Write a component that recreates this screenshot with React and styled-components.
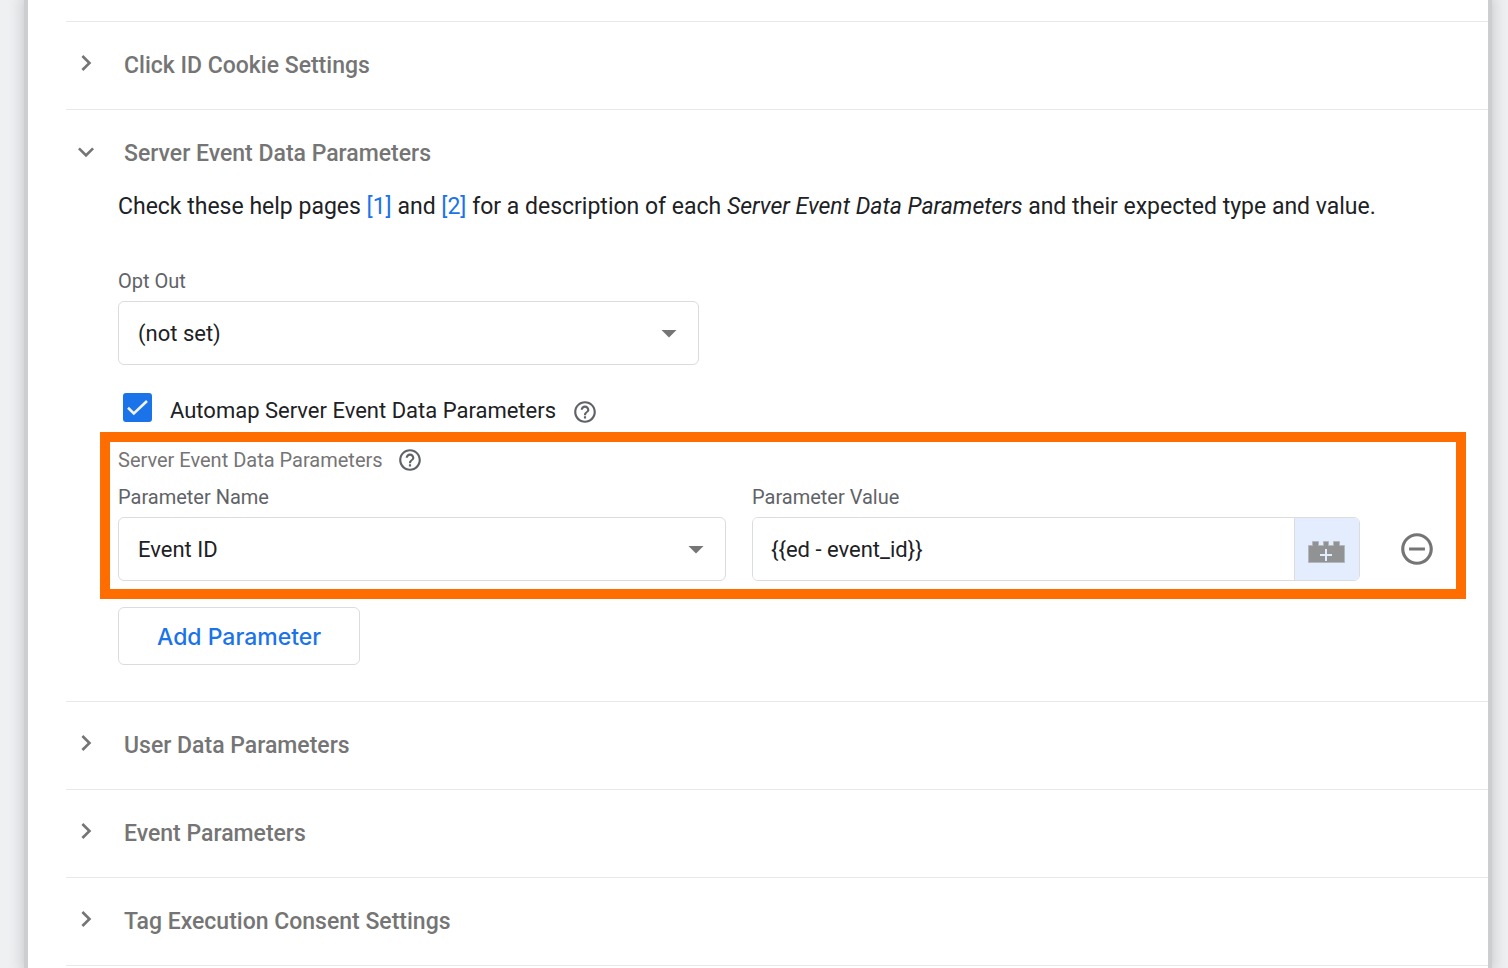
import React, { useState } from 'react';
import styled, { createGlobalStyle } from 'styled-components';
import {
  MdArrowDropDown,
  MdChevronRight,
  MdExpandMore,
  MdHelpOutline,
  MdRemoveCircleOutline,
} from 'react-icons/md';

const colors = {
  page: '#eff0f2',
  text: '#202124',
  title: '#757575',
  label: '#5f6368',
  icon: '#757575',
  line: '#e8e8e8',
  border: '#dadce0',
  blue: '#1a73e8',
  addon: '#e4edfd',
  highlight: '#ff6d00',
};

const GlobalStyle = createGlobalStyle`
  *, *::before, *::after {
    box-sizing: border-box;
  }

  body {
    margin: 0;
    background: ${colors.page};
    color: ${colors.text};
    font-family: Roboto, 'Liberation Sans', sans-serif;
    font-size: 22px;
    line-height: 32px;
  }

  button, input, select {
    font: inherit;
    color: inherit;
  }
`;

const Page = styled.main`
  min-height: 100vh;
  padding: 0 20px 0 28px;
  overflow: hidden;
`;

const Panel = styled.div`
  min-height: 100vh;
  padding: 21px 0 0 38px;
  background: #fff;
  box-shadow: 0 0 0 4px #cdced0, 0 0 14px 5px rgba(60, 64, 67, 0.24);
`;

const SectionBox = styled.section`
  border-top: 1px solid ${colors.line};

  &:last-child {
    border-bottom: 1px solid ${colors.line};
  }
`;

const SectionTitle = styled.h2`
  margin: 0;
  font-size: 23px;
  font-weight: 500;
`;

const SectionToggle = styled.button`
  display: flex;
  align-items: center;
  gap: 18px;
  width: 100%;
  padding: ${props => (props.$open ? '28px 0 21px' : '28px 0 27px')};
  border: 0;
  background: none;
  color: ${colors.title};
  text-align: left;
  cursor: pointer;
`;

const ToggleIcon = styled.span`
  display: flex;
  justify-content: center;
  align-items: center;
  width: 40px;
  height: 32px;
  padding-bottom: ${props => (props.$open ? '4px' : '6px')};
`;

const SectionBody = styled.div`
  padding: 0 22px 36px 52px;
`;

const Description = styled.p`
  margin: 0 0 46px;
  font-size: 23px;
`;

const Link = styled.a`
  color: ${colors.blue};
  text-decoration: none;
`;

const Field = styled.div`
  display: flex;
  flex-direction: column;
  gap: 8px;
  min-width: 0;
  width: ${props => props.$width || 'auto'};
  max-width: 100%;
`;

const Label = styled.label`
  color: ${colors.label};
  font-size: 20px;
  line-height: 24px;
`;

const SelectBox = styled.div`
  display: grid;
  grid-template-columns: 1fr 48px;
  align-items: center;

  svg {
    grid-area: 1 / 2;
    color: ${colors.icon};
    pointer-events: none;
  }
`;

const Select = styled.select`
  grid-area: 1 / 1 / 2 / 3;
  height: 64px;
  padding: 2px 48px 0 19px;
  border: 1px solid ${colors.border};
  border-radius: 6px;
  background: #fff;
  appearance: none;
`;

const CheckRow = styled.div`
  display: flex;
  gap: 16px;
  height: 32px;
  margin: 28px 0 7px;
  padding-left: 5px;
`;

const CheckLabel = styled.label`
  display: flex;
  gap: 18px;
`;

const CheckText = styled.span`
  padding-top: 2px;
`;

const CheckMark = styled.span`
  display: grid;
  width: 29px;
  height: 29px;

  input,
  svg {
    grid-area: 1 / 1;
  }

  svg {
    pointer-events: none;
  }

  input:not(:checked) + svg {
    visibility: hidden;
  }
`;

const CheckInput = styled.input`
  width: 29px;
  height: 29px;
  margin: 0;
  border: 3px solid ${colors.icon};
  border-radius: 3px;
  appearance: none;

  &:checked {
    border-color: ${colors.blue};
    background: ${colors.blue};
  }
`;

const IconButton = styled.button`
  display: flex;
  justify-content: center;
  align-items: center;
  padding: 0;
  border: 0;
  background: none;
  color: ${props => props.$color || colors.icon};
  cursor: pointer;

  ${CheckRow} > & {
    padding-top: 6px;
  }
`;

const Highlight = styled.div`
  margin-left: -18px;
  padding: 6px 8px 8px;
  border: 10px solid ${colors.highlight};
`;

const TableTitle = styled.div`
  display: flex;
  align-items: center;
  gap: 14px;
  height: 24px;
  margin-bottom: 13px;
  color: ${colors.title};
  font-size: 20px;
  line-height: 24px;
`;

const ParameterRow = styled.div`
  display: grid;
  grid-template-columns: 1fr 1fr 62px;
  align-items: end;
  gap: 26px;

  > button {
    height: 64px;
  }
`;

const InputGroup = styled.div`
  display: flex;
  height: 64px;
  border: 1px solid ${colors.border};
  border-radius: 6px;
  overflow: hidden;
`;

const TextInput = styled.input`
  flex: 1;
  min-width: 0;
  padding: 2px 18px 0;
  border: 0;
  background: #fff;
`;

const VariableButton = styled.button`
  display: flex;
  justify-content: center;
  align-items: center;
  width: 65px;
  padding: 6px 2px 0 0;
  border: 0;
  border-left: 1px solid ${colors.border};
  background: ${colors.addon};
  cursor: pointer;
`;

const AddButton = styled.button`
  height: 58px;
  margin-top: 8px;
  padding: 2px 38px 0;
  border: 1px solid ${colors.border};
  border-radius: 6px;
  background: #fff;
  color: ${colors.blue};
  font-family: Inter, Roboto, sans-serif;
  font-size: 23px;
  font-weight: 500;
  cursor: pointer;
`;

const BrickIcon = () => (
  <svg width="37" height="22" viewBox="0 0 37 22" aria-hidden="true">
    <path
      fill="#919294"
      stroke="#b4b7bc"
      d="M.5 4.5h4v-4h6v4h5v-4h5v4h5v-4h6v4h5v17H.5z"
    />
    <path stroke="#e4edfd" strokeWidth="2" d="M12 14h12M18 8v12" />
  </svg>
);

const Section = ({ title, defaultOpen = false, children }) => {
  const [open, setOpen] = useState(defaultOpen);

  return (
    <SectionBox>
      <SectionTitle>
        <SectionToggle
          type="button"
          $open={open}
          aria-expanded={open}
          onClick={() => setOpen(!open)}
        >
          <ToggleIcon $open={open}>
            {open ? <MdExpandMore size={32} /> : <MdChevronRight size={32} />}
          </ToggleIcon>
          {title}
        </SectionToggle>
      </SectionTitle>
      {open && children && <SectionBody>{children}</SectionBody>}
    </SectionBox>
  );
};

const SelectField = ({ id, label, options, width }) => (
  <Field $width={width}>
    <Label htmlFor={id}>{label}</Label>
    <SelectBox>
      <Select id={id}>
        {options.map(option => (
          <option key={option}>{option}</option>
        ))}
      </Select>
      <MdArrowDropDown size={36} />
    </SelectBox>
  </Field>
);

const App = () => {
  const [automap, setAutomap] = useState(true);
  const [value, setValue] = useState('{{ed - event_id}}');

  return (
    <Page>
      <GlobalStyle />
      <Panel>
        <Section title="Click ID Cookie Settings" />
        <Section title="Server Event Data Parameters" defaultOpen>
          <Description>
            Check these help pages <Link href="#help-1">[1]</Link> and{' '}
            <Link href="#help-2">[2]</Link> for a description of each{' '}
            <em>Server Event Data Parameters</em> and their expected type and
            value.
          </Description>
          <SelectField
            id="opt-out"
            label="Opt Out"
            options={['(not set)']}
            width="581px"
          />
          <CheckRow>
            <CheckLabel>
              <CheckMark>
                <CheckInput
                  type="checkbox"
                  checked={automap}
                  onChange={e => setAutomap(e.target.checked)}
                />
                <svg width="29" height="29" viewBox="0 0 29 29" fill="none">
                  <path
                    stroke="#f1f3f4"
                    strokeWidth="2.6"
                    d="M5 14.8l5.8 5.6L24 8"
                  />
                </svg>
              </CheckMark>
              <CheckText>Automap Server Event Data Parameters</CheckText>
            </CheckLabel>
            <IconButton type="button" $color={colors.label} aria-label="Help">
              <MdHelpOutline size={26} />
            </IconButton>
          </CheckRow>
          <Highlight>
            <TableTitle>
              Server Event Data Parameters
              <IconButton type="button" $color={colors.label} aria-label="Help">
                <MdHelpOutline size={26} />
              </IconButton>
            </TableTitle>
            <ParameterRow>
              <SelectField
                id="parameter-name"
                label="Parameter Name"
                options={['Event ID']}
              />
              <Field>
                <Label htmlFor="parameter-value">Parameter Value</Label>
                <InputGroup>
                  <TextInput
                    id="parameter-value"
                    type="text"
                    value={value}
                    onChange={e => setValue(e.target.value)}
                  />
                  <VariableButton type="button" aria-label="Insert variable">
                    <BrickIcon />
                  </VariableButton>
                </InputGroup>
              </Field>
              <IconButton type="button" aria-label="Remove parameter">
                <MdRemoveCircleOutline size={38} />
              </IconButton>
            </ParameterRow>
          </Highlight>
          <AddButton type="button">Add Parameter</AddButton>
        </Section>
        <Section title="User Data Parameters" />
        <Section title="Event Parameters" />
        <Section title="Tag Execution Consent Settings" />
      </Panel>
    </Page>
  );
};

export default App;
